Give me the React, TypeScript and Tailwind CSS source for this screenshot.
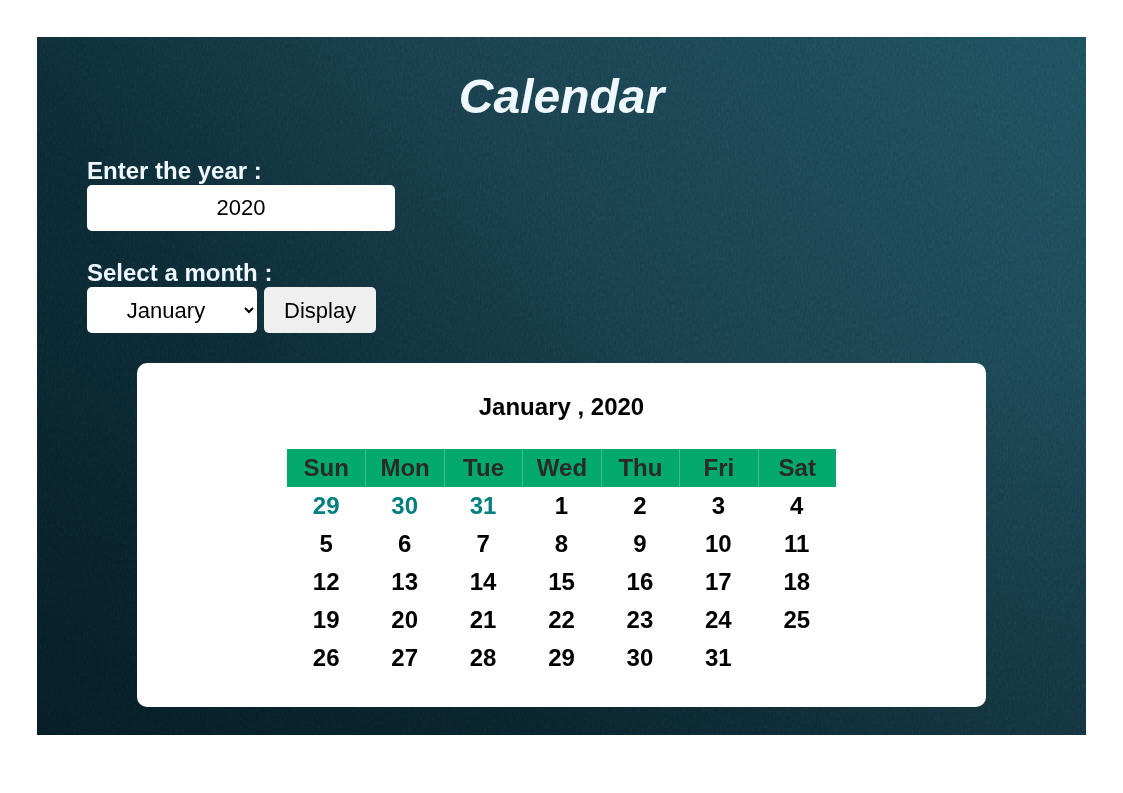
import { useState, type FormEvent } from "react";

const MONTHS = [
  "January", "February", "March", "April", "May", "June",
  "July", "August", "September", "October", "November", "December",
];
const DAYS = ["Sun", "Mon", "Tue", "Wed", "Thu", "Fri", "Sat"];

type Cell = { day: number; outside: boolean } | null;

// Splits a month into weeks, led in by the last days of the month before.
function buildWeeks(year: number, month: number): Cell[][] {
  const lead = new Date(year, month, 1).getDay();
  const total = new Date(year, month + 1, 0).getDate();
  const previous = new Date(year, month, 0).getDate();
  const cells: Cell[] = [];
  for (let i = lead - 1; i >= 0; i--) cells.push({ day: previous - i, outside: true });
  for (let d = 1; d <= total; d++) cells.push({ day: d, outside: false });
  while (cells.length % 7 !== 0) cells.push(null);
  const weeks: Cell[][] = [];
  for (let i = 0; i < cells.length; i += 7) weeks.push(cells.slice(i, i + 7));
  return weeks;
}

function Backdrop() {
  return (
    <svg aria-hidden="true" className="absolute inset-0 -z-10 h-full w-full opacity-15 mix-blend-soft-light">
      <filter id="grain" colorInterpolationFilters="sRGB">
        <feTurbulence type="fractalNoise" baseFrequency="0.6 0.25" numOctaves="2" seed="4" />
        <feColorMatrix
          type="matrix"
          values="1 0 0 0 0  1 0 0 0 0  1 0 0 0 0  0 0 0 0 1"
        />
      </filter>
      <rect width="100%" height="100%" filter="url(#grain)" />
    </svg>
  );
}

function MonthTable({ year, month }: { year: number; month: number }) {
  return (
    <section className="mx-[50px] rounded-[10px] bg-white px-[150px] py-[30px] text-black">
      <h2 className="mb-7 text-center text-2xl leading-7 font-bold">
        {`${MONTHS[month]} , ${year}`}
      </h2>
      <table className="w-full table-fixed border-separate border-spacing-0 text-center text-2xl leading-7 font-bold">
        <thead>
          <tr>
            {DAYS.map((name) => (
              <th
                key={name}
                scope="col"
                className="border-l border-[#3fba8f] bg-[#04aa6d] py-[5px] text-[#2a2a2a] first:border-l-0"
              >
                {name}
              </th>
            ))}
          </tr>
        </thead>
        <tbody>
          {buildWeeks(year, month).map((week, row) => (
            <tr key={row}>
              {week.map((cell, column) => (
                <td key={column} className={cell?.outside ? "py-[5px] text-[#008080]" : "py-[5px]"}>
                  {cell?.day}
                </td>
              ))}
            </tr>
          ))}
        </tbody>
      </table>
    </section>
  );
}

export default function App() {
  const [year, setYear] = useState("2020");
  const [month, setMonth] = useState(0);
  const [shown, setShown] = useState({ year: 2020, month: 0 });

  const display = (event: FormEvent) => {
    event.preventDefault();
    const value = parseInt(year, 10);
    if (value > 0) setShown({ year: value, month });
  };

  return (
    <div className="bg-white p-[37px] font-['Liberation_Sans',Arial,sans-serif]">
      <main className="relative isolate bg-[linear-gradient(to_top,rgba(4,22,30,0.3)_0%,rgba(4,22,30,0)_55%),linear-gradient(50deg,#08222c_0%,#0d2d38_32%,#1b4350_60%,#1e4b5a_78%,#205563_100%)] px-[50px] pt-8 pb-7 text-[#f0f8ff]">
        <Backdrop />
        <h1 className="text-center text-5xl leading-[56px] font-bold italic">Calendar</h1>
        <form onSubmit={display} className="mt-8 mb-[30px] flex flex-col items-start">
          <label htmlFor="year" className="text-2xl leading-7 font-bold">
            Enter the year :
          </label>
          <input
            id="year"
            type="text"
            inputMode="numeric"
            value={year}
            onChange={(event) => setYear(event.target.value)}
            className="h-[46px] w-[308px] rounded-[5px] bg-white text-center text-[22px] text-black"
          />
          <label htmlFor="month" className="mt-7 text-2xl leading-7 font-bold">
            Select a month :
          </label>
          <div className="flex gap-[7px] text-[22px] text-black">
            <select
              id="month"
              value={month}
              onChange={(event) => setMonth(Number(event.target.value))}
              className="h-[46px] w-[170px] rounded-[5px] bg-white text-center"
            >
              {MONTHS.map((name, index) => (
                <option key={name} value={index}>
                  {name}
                </option>
              ))}
            </select>
            <button type="submit" className="h-[46px] rounded-[5px] bg-[#efefef] px-5">
              Display
            </button>
          </div>
        </form>
        <MonthTable year={shown.year} month={shown.month} />
      </main>
    </div>
  );
}
